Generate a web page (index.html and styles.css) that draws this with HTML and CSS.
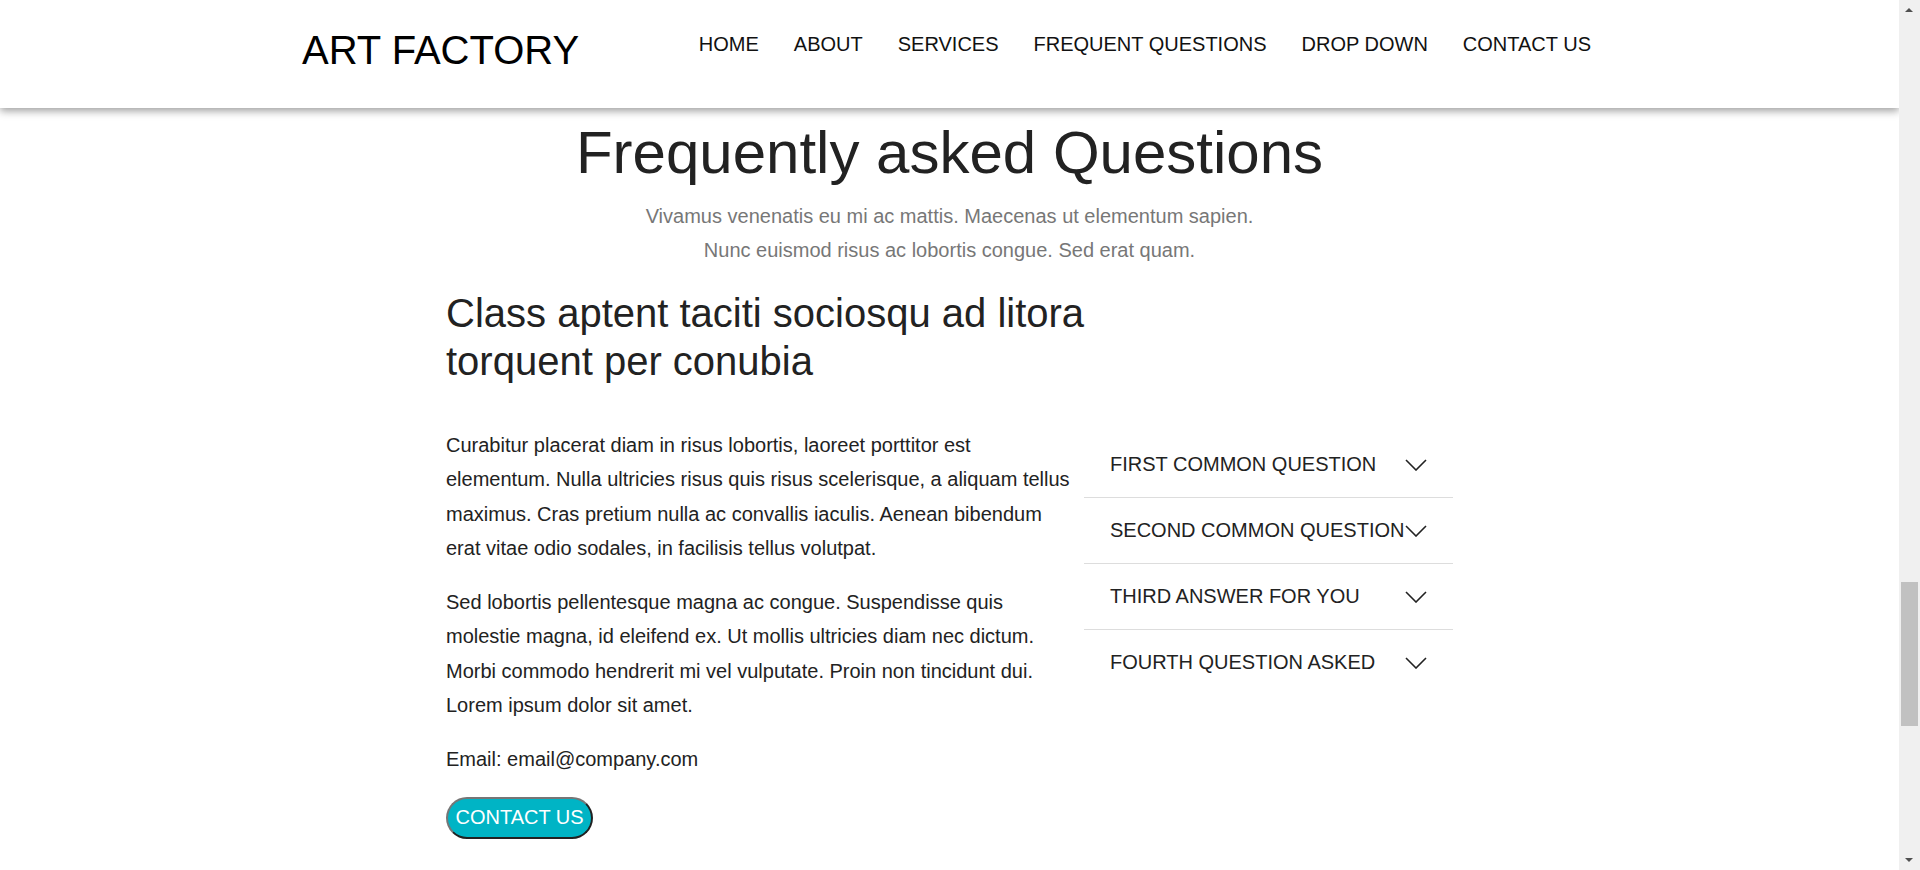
FILE: index.html
```html
<!DOCTYPE html>
<html lang="en">
<head>
<meta charset="utf-8">
<title>Art Factory - FAQ</title>
<link rel="stylesheet" href="styles.css">
</head>
<body>
<header class="site-header">
  <div class="header-inner">
    <a class="logo" href="#">ART FACTORY</a>
    <nav class="main-nav">
      <a href="#">HOME</a>
      <a href="#">ABOUT</a>
      <a href="#">SERVICES</a>
      <a href="#">FREQUENT QUESTIONS</a>
      <a href="#">DROP DOWN</a>
      <a href="#">CONTACT US</a>
    </nav>
  </div>
</header>

<section class="faq">
  <h1 class="faq-title">Frequently asked Questions</h1>
  <p class="faq-sub">Vivamus venenatis eu mi ac mattis. Maecenas ut elementum sapien.<br>Nunc euismod risus ac lobortis congue. Sed erat quam.</p>

  <div class="faq-body">
    <h2 class="faq-heading">Class aptent taciti sociosqu ad litora torquent per conubia</h2>
    <div class="faq-row">
      <div class="faq-left">
        <p>Curabitur placerat diam in risus lobortis, laoreet porttitor est elementum. Nulla ultricies risus quis risus scelerisque, a aliquam tellus maximus. Cras pretium nulla ac convallis iaculis. Aenean bibendum erat vitae odio sodales, in facilisis tellus volutpat.</p>
        <p>Sed lobortis pellentesque magna ac congue. Suspendisse quis molestie magna, id eleifend ex. Ut mollis ultricies diam nec dictum. Morbi commodo hendrerit mi vel vulputate. Proin non tincidunt dui. Lorem ipsum dolor sit amet.</p>
        <p>Email: email@company.com</p>
        <button class="contact-btn" type="button">CONTACT US</button>
      </div>
      <div class="accordion">
        <div class="acc-item"><span>FIRST COMMON QUESTION</span><svg class="chev" width="22" height="12" viewBox="0 0 22 12"><polyline points="1,1 11,11 21,1" /></svg></div>
        <div class="acc-item"><span>SECOND COMMON QUESTION</span><svg class="chev" width="22" height="12" viewBox="0 0 22 12"><polyline points="1,1 11,11 21,1" /></svg></div>
        <div class="acc-item"><span>THIRD ANSWER FOR YOU</span><svg class="chev" width="22" height="12" viewBox="0 0 22 12"><polyline points="1,1 11,11 21,1" /></svg></div>
        <div class="acc-item"><span>FOURTH QUESTION ASKED</span><svg class="chev" width="22" height="12" viewBox="0 0 22 12"><polyline points="1,1 11,11 21,1" /></svg></div>
      </div>
    </div>
  </div>
</section>

<div class="scrollbar" aria-hidden="true">
  <span class="sb-arrow sb-up"></span>
  <span class="sb-thumb"></span>
  <span class="sb-arrow sb-down"></span>
</div>
</body>
</html>
```
FILE: styles.css
```css
body {
  margin: 0 21px 0 0;
  font-family: "Liberation Sans", Arial, sans-serif;
  color: #222;
  background: #fff;
}

a {
  color: inherit;
  text-decoration: none;
}

.site-header {
  position: sticky;
  top: 0;
  z-index: 10;
  height: 108px;
  background: #fff;
  box-shadow: 0 3px 8px rgba(0, 0, 0, 0.38);
}

.header-inner {
  width: 1295px;
  margin: 0 auto;
  display: flex;
  align-items: flex-start;
  padding-top: 28px;
}

.logo {
  font-size: 40px;
  color: #000;
  line-height: normal;
}

.main-nav {
  margin-left: auto;
  margin-right: 6px;
  margin-top: 5px;
  display: flex;
  gap: 35px;
}

.main-nav a {
  font-size: 20px;
  color: #111;
  line-height: normal;
}

.faq {
  padding: 10px 0 160px;
}

.faq-title {
  margin: 0;
  text-align: center;
  font-size: 60px;
  font-weight: normal;
  line-height: normal;
  color: #222;
}

.faq-sub {
  margin: 12px 0 0;
  text-align: center;
  font-size: 20px;
  line-height: 34px;
  color: #777;
}

.faq-body {
  width: 1007px;
  margin: 22px auto 0;
}

.faq-heading {
  margin: 0 0 43px;
  max-width: 700px;
  font-size: 40px;
  font-weight: normal;
  line-height: 48px;
  color: #222;
}

.faq-row {
  display: grid;
  grid-template-columns: 638px 369px;
  align-items: start;
}

.faq-left p {
  margin: 0 8px 20px 0;
  font-size: 20px;
  line-height: 34.3px;
  color: #222;
}

.contact-btn {
  font-family: "Liberation Sans", Arial, sans-serif;
  font-size: 20px;
  line-height: normal;
  color: #fff;
  background: #00b4c5;
  border: 2px outset #767676;
  border-radius: 22px;
  padding: 7.5px 7.5px;
  cursor: pointer;
}

.accordion {
  margin-top: 4px;
}

.acc-item {
  height: 65px;
  padding: 0 26px;
  display: flex;
  align-items: center;
  justify-content: space-between;
  font-size: 20px;
  color: #222;
  border-bottom: 1px solid #ddd;
}

.acc-item:last-child {
  border-bottom: none;
}

.chev {
  flex: none;
  fill: none;
  stroke: #222;
  stroke-width: 1.6;
}

/* window scrollbar as seen in the capture */
.scrollbar {
  position: fixed;
  top: 0;
  right: 0;
  bottom: 0;
  width: 21px;
  background: #f0f0f0;
  z-index: 20;
}

.sb-thumb {
  position: absolute;
  left: 2px;
  right: 2px;
  top: 582px;
  height: 144px;
  background: #c1c1c1;
}

.sb-arrow {
  position: absolute;
  left: 6px;
  width: 0;
  height: 0;
  border-left: 4.5px solid transparent;
  border-right: 4.5px solid transparent;
}

.sb-up {
  top: 8px;
  border-bottom: 4px solid #505050;
}

.sb-down {
  bottom: 8px;
  border-top: 4px solid #505050;
}
```
